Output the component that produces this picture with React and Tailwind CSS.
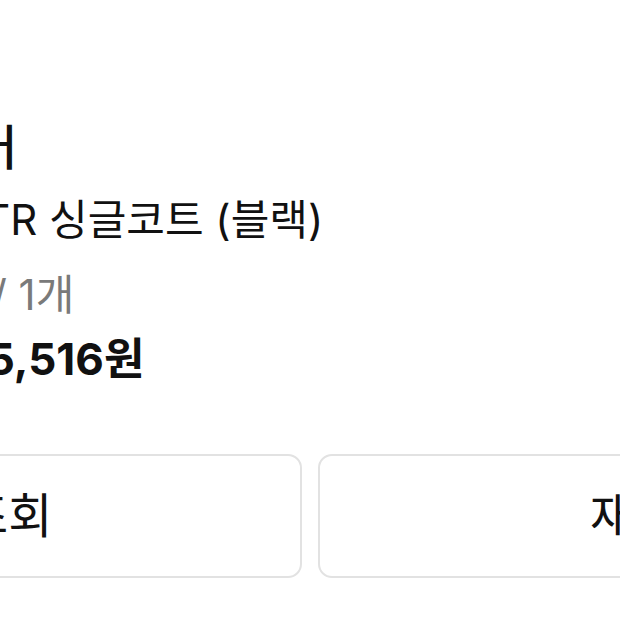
export default function App() {
  const font = "font-['Inter','Noto_Sans_CJK_KR',sans-serif]";
  return (
    <div className={`w-[620px] h-[620px] overflow-hidden bg-white ${font}`}>
      <div className="-ml-[374px] w-[1368px] pt-[116px] flex flex-col">
        <div className="ml-[241px] flex flex-col whitespace-nowrap">
          <p className="text-[48px] leading-[64px] font-medium text-[#111] ml-[18px]">스토어</p>
          <p className="text-[42px] leading-[80px] text-[#111] ml-[-11px]">베타 MTR 싱글코트 (블랙)</p>
          <p className="text-[42px] leading-[70px] text-[#7a7a7a]">검정 L / 1개</p>
          <p className="text-[44px] leading-[58px] font-bold text-[#111] ml-[73px]">125,516원</p>
        </div>
        <div className="mt-[66px] flex gap-[16px]">
          <button className="flex-1 h-[124px] rounded-[14px] border-2 border-[#e2e2e2] bg-white text-[48px] text-[#111]">
            배송조회
          </button>
          <button className="flex-1 h-[124px] rounded-[14px] border-2 border-[#e2e2e2] bg-white text-[48px] text-[#111]">
            재구매
          </button>
        </div>
      </div>
    </div>
  );
}
